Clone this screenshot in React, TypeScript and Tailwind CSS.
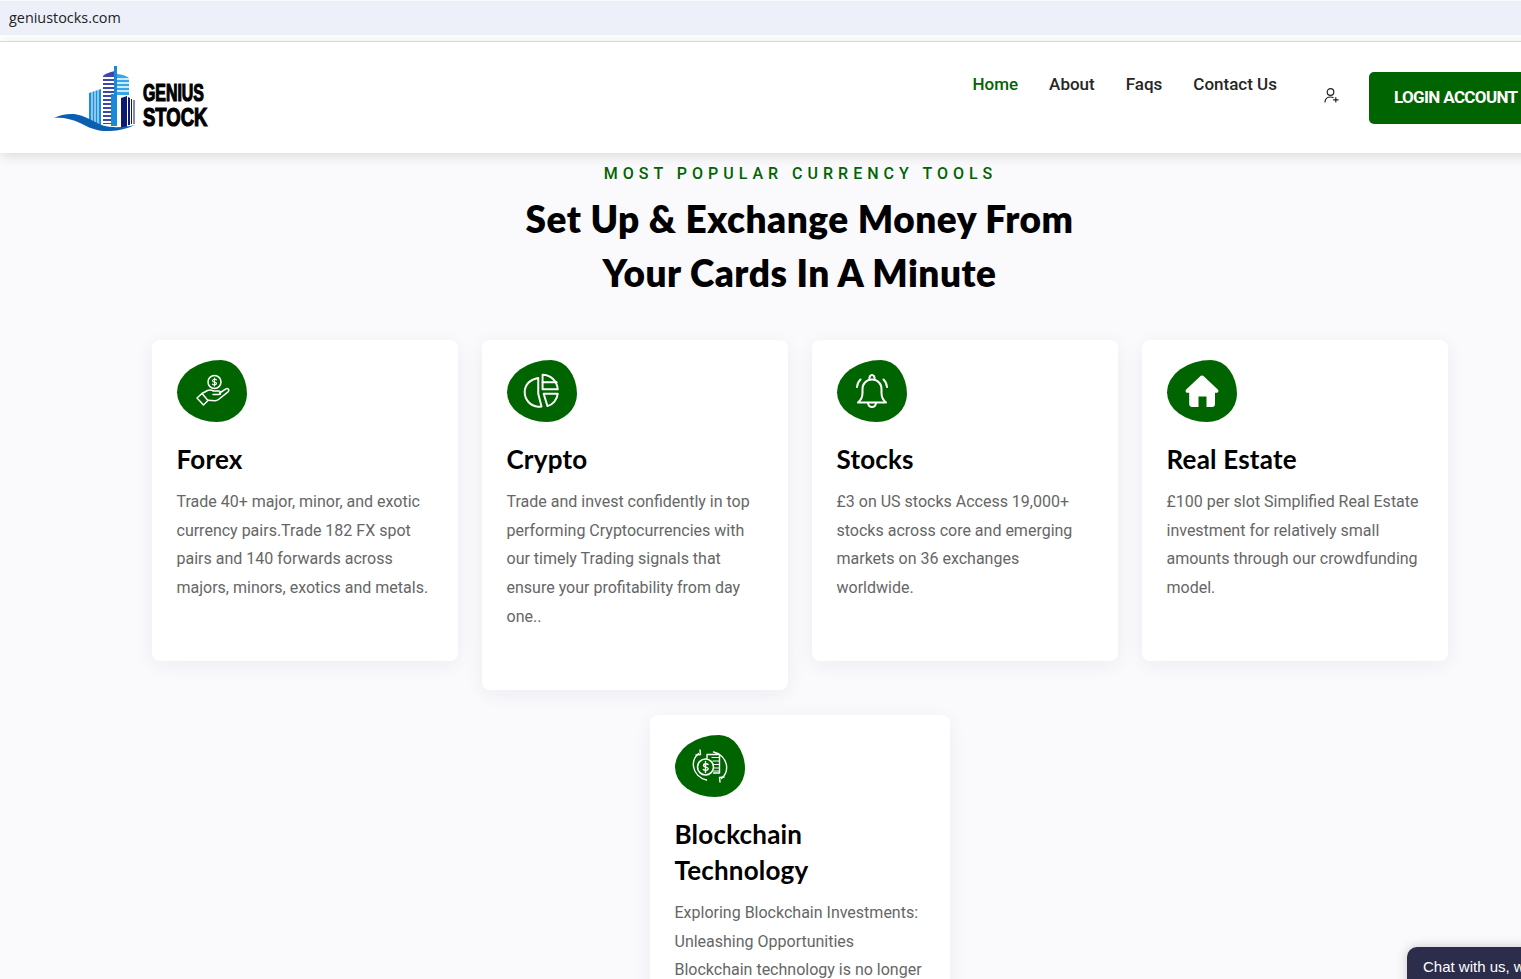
import React from 'react';

type Service = {
  title: string;
  text: string;
  icon: React.ReactNode;
  wide?: boolean;
};

const strokeProps = {
  fill: 'none',
  stroke: 'white',
  strokeWidth: 1.6,
  strokeLinecap: 'round' as const,
  strokeLinejoin: 'round' as const,
};

const HandCoinIcon = () => (
  <svg width="36" height="36" viewBox="0 0 36 36" {...strokeProps} strokeWidth={1.5}>
    <circle cx="20.500" cy="9" r="6.500" />
    <path d="M22.400 6.800c-.7-.9-3.800-1-3.800.9 0 1.900 3.900.9 3.900 2.900 0 1.700-3.200 1.600-4.100.6M20.500 5v8" strokeWidth={1.1} />
    <path d="M3 25l5-4.500 6 7-4.500 4.500z" />
    <path d="M8 20.500l5.500-3c2-1 4-.5 6 .5h5.500c2.200 0 2.200 3.500 0 3.500h-6" />
    <path d="M25.500 20l6.500-4.200c2-1.100 3.700 1.400 2 3L24.500 26.500c-1 .8-2.200 1.200-3.500 1.200l-7-.5" />
  </svg>
);

const PieIcon = () => (
  <svg width="39" height="39" viewBox="0 0 36 36" {...strokeProps} strokeWidth={1.8}>
    <path d="M15 5.500C8 6.500 2.500 11.500 2.500 18.500c0 7 5 13 12.500 13.500 1 0 2 0 3-.2L15 20z" />
    <path d="M19 2.500c7.500 0 13.500 6 14 13.500H19z" />
    <path d="M19 9.500h13" />
    <path d="M20 20h13c-.5 5.500-4.500 10-9.500 11.500z" />
  </svg>
);

const BellIcon = () => (
  <svg width="34" height="36" viewBox="0 0 34 36" {...strokeProps} strokeWidth={2}>
    <path d="M3 29.500h28c-3-2.500-4.500-5-4.500-9.500v-4c0-5.500-4-9.500-9.500-9.500S7.500 10.500 7.500 16v4c0 4.500-1.500 7-4.500 9.500z" />
    <path d="M14.500 6.500C14 3.500 15.500 2 17 2s3 1.500 2.500 4.500" />
    <path d="M13 29.800c.3 3 2 4.200 4 4.200s3.700-1.200 4-4.200" />
    <path d="M2 14c.3-3 1.300-5.500 3.500-7.500M32 14c-.3-3-1.300-5.500-3.500-7.500" />
  </svg>
);

const HomeIcon = () => (
  <svg width="34" height="32" viewBox="0 0 34 32">
    <path
      fill="white"
      fillRule="evenodd"
      d="M17 .5c.8 0 1.500.4 2 .9l13.800 13c1.300 1.300.5 3.400-1.300 3.400H30v11.400c0 1.500-1.100 2.800-2.600 2.800H21.500V21.500h-8V32H7c-1.500 0-2.800-1.300-2.800-2.800V17.800H2.500c-1.800 0-2.600-2.100-1.300-3.400L15 1.400c.5-.5 1.200-.9 2-.9z"
    />
  </svg>
);

const ExchangeIcon = () => (
  <svg width="36" height="36" viewBox="0 0 36 36" {...strokeProps} strokeWidth={1.1}>
    <path d="M6.500 5.500C2.500 9 .8 13.500 1.500 18.500c.8 6.500 6 12 13 13.500" strokeWidth={1.4} />
    <path d="M7 2l.5 4.500-4.500.5" transform="translate(1 0)" strokeWidth={1.4} />
    <path d="M29.500 30.500c4-3.500 5.700-8 5-13C33.700 11 28.500 5.500 21.500 4" strokeWidth={1.4} />
    <path d="M28 34l-.5-4.500 4.500-.5" strokeWidth={1.4} />
    <circle cx="13.500" cy="19" r="8" strokeWidth={1.6} />
    <path d="M16 16.500c-.8-1.200-4.500-1.200-4.500 1 0 2.200 4.700 1.100 4.700 3.300 0 2-3.800 1.900-4.900.7M13.500 13.500v11" strokeWidth={1.4} />
    <path d="M15 10.500V6.500h12.500V25H21.500" strokeWidth={1.4} />
    <path d="M20 9.500h7.500M21 13h6.500M22 16.500h5.500M22 20h5.500M21.500 23h6" strokeWidth={1.2} />
  </svg>
);

const services: Service[] = [
  {
    title: 'Forex',
    text: 'Trade 40+ major, minor, and exotic currency pairs.Trade 182 FX spot pairs and 140 forwards across majors, minors, exotics and metals.',
    icon: <HandCoinIcon />,
  },
  {
    title: 'Crypto',
    text: 'Trade and invest confidently in top performing Cryptocurrencies with our timely Trading signals that ensure your profitability from day one..',
    icon: <PieIcon />,
  },
  {
    title: 'Stocks',
    text: '£3 on US stocks Access 19,000+ stocks across core and emerging markets on 36 exchanges worldwide.',
    icon: <BellIcon />,
  },
  {
    title: 'Real Estate',
    text: '£100 per slot Simplified Real Estate investment for relatively small amounts through our crowdfunding model.',
    icon: <HomeIcon />,
  },
  {
    title: 'Blockchain Technology',
    text: 'Exploring Blockchain Investments: Unleashing Opportunities Blockchain technology is no longer just a buzzword, it is reshaping how the world invests.',
    icon: <ExchangeIcon />,
    wide: true,
  },
];

const Logo = () => (
  <div className="flex items-end">
    <svg width="84" height="66" viewBox="0 0 84 66">
      {/* left block */}
      <path d="M35 27l12-4v36l-12-3z" fill="#1a8fdc" />
      <path d="M38 26v30M41 25v32M44 24v34" stroke="#ffffff" strokeWidth="1" />
      {/* striped centre tower */}
      <path d="M61 5c-6 1-10 3-12 5v48h12z" fill="#3f48a8" />
      <path d="M48 12h13M48 16h13M48 20h13M48 24h13M48 28h13M48 32h13M48 36h13M48 40h13M48 44h13M48 48h13M48 52h13M48 56h13" stroke="#ffffff" strokeWidth="1.800" />
      {/* spire */}
      <path d="M60 0h3v60h-6V28h3z" fill="#1b8ad6" />
      <path d="M63 8c5 .5 9 1.500 12 4v17H63z" fill="#35a7e8" />
      <path d="M63 13h12M63 17h12M63 21h12M63 25h12" stroke="#ffffff" strokeWidth="1.500" />
      {/* navy wing */}
      <path d="M67 32l6-2v31h-6z" fill="#0b1a6e" />
      <path d="M74 31l2 1v27h-2zM77 33h1v25h-1zM79.500 34h1v24h-1z" fill="#0b1a6e" />
      {/* wave */}
      <path d="M0 52c6-3 13-4.500 20-4 11 1 19 8 29 11.500 9 2.500 21 2 32-.5-8 4-16 5.500-25 6-14 .6-21-3.500-30-8C18 53 8 51 0 52z" fill="#0b5fb0" />
    </svg>
    <div className="mb-[2px] ml-[5px] font-['Liberation_Sans',sans-serif] font-bold text-black">
      <div className="w-[62px] origin-left scale-x-[.69] text-[23px] leading-[23px] whitespace-nowrap [-webkit-text-stroke:1.2px_black]">GENIUS</div>
      <div className="w-[66px] origin-left scale-x-[.74] text-[25px] leading-[25px] whitespace-nowrap [-webkit-text-stroke:1.2px_black]">STOCK</div>
    </div>
  </div>
);

const Header = () => (
  <header className="relative z-10 flex h-[111px] bg-white font-['Roboto',sans-serif] shadow-[0_2px_12px_rgba(0,0,0,0.14)]">
    <div className="ml-[54px] mt-[24px]">
      <Logo />
    </div>
    <nav className="ml-auto mr-[57px] flex items-start">
      <ul className="mt-[32px] flex gap-[31px] text-[17px] font-medium leading-[20px] text-[#262626]">
        <li className="text-[#006400]">Home</li>
        <li>About</li>
        <li>Faqs</li>
        <li>Contact Us</li>
      </ul>
      <svg className="ml-[46px] mt-[45px]" width="17" height="17" viewBox="0 0 17 17" fill="none" stroke="#222222" strokeWidth="1.200" strokeLinecap="round">
        <circle cx="7.500" cy="5" r="3.300" />
        <path d="M2 15c.3-3.500 2.500-5 5.500-5 1 0 1.800.2 2.500.6" />
        <path d="M12.800 10.500v4.500M10.500 12.800h4.600" />
      </svg>
      <button className="ml-[29px] mt-[30px] h-[52px] w-[173px] rounded-[5px] bg-[#006400] pl-[25px] text-left text-[17px] font-bold tracking-[-0.65px] whitespace-nowrap text-white">
        LOGIN ACCOUNT
      </button>
    </nav>
  </header>
);

const ServiceCard = ({ title, text, icon, wide }: Service) => (
  <div className={`rounded-[8px] bg-white px-[25px] pt-[20px] pb-[58.2px] shadow-[0_4px_20px_rgba(20,20,60,0.06)] ${wide ? 'w-[300px]' : 'w-[306px]'}`}>
    <div className="flex h-[62px] w-[70px] items-center justify-center rounded-[63%_37%_43%_57%/52%_55%_45%_48%] bg-[#006400]">
      {icon}
    </div>
    <h3 className="mt-[19px] font-['Lato',sans-serif] text-[26px] font-bold leading-[36px] tracking-[0.2px] text-black">{title}</h3>
    <p className="mt-[10.8px] font-['Roboto',sans-serif] text-[16px] leading-[28.8px] text-[#666666]">{text}</p>
  </div>
);

export default function App() {
  return (
    <div className="relative h-[979px] w-full overflow-hidden bg-[#fafafd]">
      <div className="w-[1599px]">
        <div className="bg-white">
          <div className="mt-[1px] flex h-[34px] items-center bg-[#edf0f9] pb-[1px] pl-[9px] font-['Open_Sans',sans-serif] text-[14.4px] text-[#222222]">
            geniustocks.com
          </div>
          <div className="h-[6px]" />
          <div className="h-[1px] bg-[#e3e3e3]" />
        </div>
        <Header />
        <section className="text-center">
          <p className="mt-[12px] pl-[2px] font-['Roboto',sans-serif] text-[16px] font-medium leading-[18px] tracking-[5px] text-[#006400]">
            MOST POPULAR CURRENCY TOOLS
          </p>
          <h2 className="mt-[9px] font-['Lato',sans-serif] text-[37px] font-extrabold leading-[54px] tracking-[0.5px] text-black">
            Set Up &amp; Exchange Money From
            <br />
            Your Cards In A Minute
          </h2>
        </section>
        <section className="mt-[40px] flex flex-wrap items-start justify-center gap-x-[24px] gap-y-[25px]">
          {services.map((service) => (
            <ServiceCard key={service.title} {...service} />
          ))}
        </section>
      </div>
      <div className="absolute left-[1407px] top-[947px] h-[40px] w-[200px] rounded-tl-[10px] bg-[#2c2d4a] pl-[16px] pt-[10px] font-['Liberation_Sans',sans-serif] text-[15px] leading-[20px] whitespace-nowrap text-white shadow-[0_0_12px_rgba(0,0,0,0.2)]">
        Chat with us, we are online!
      </div>
    </div>
  );
}
